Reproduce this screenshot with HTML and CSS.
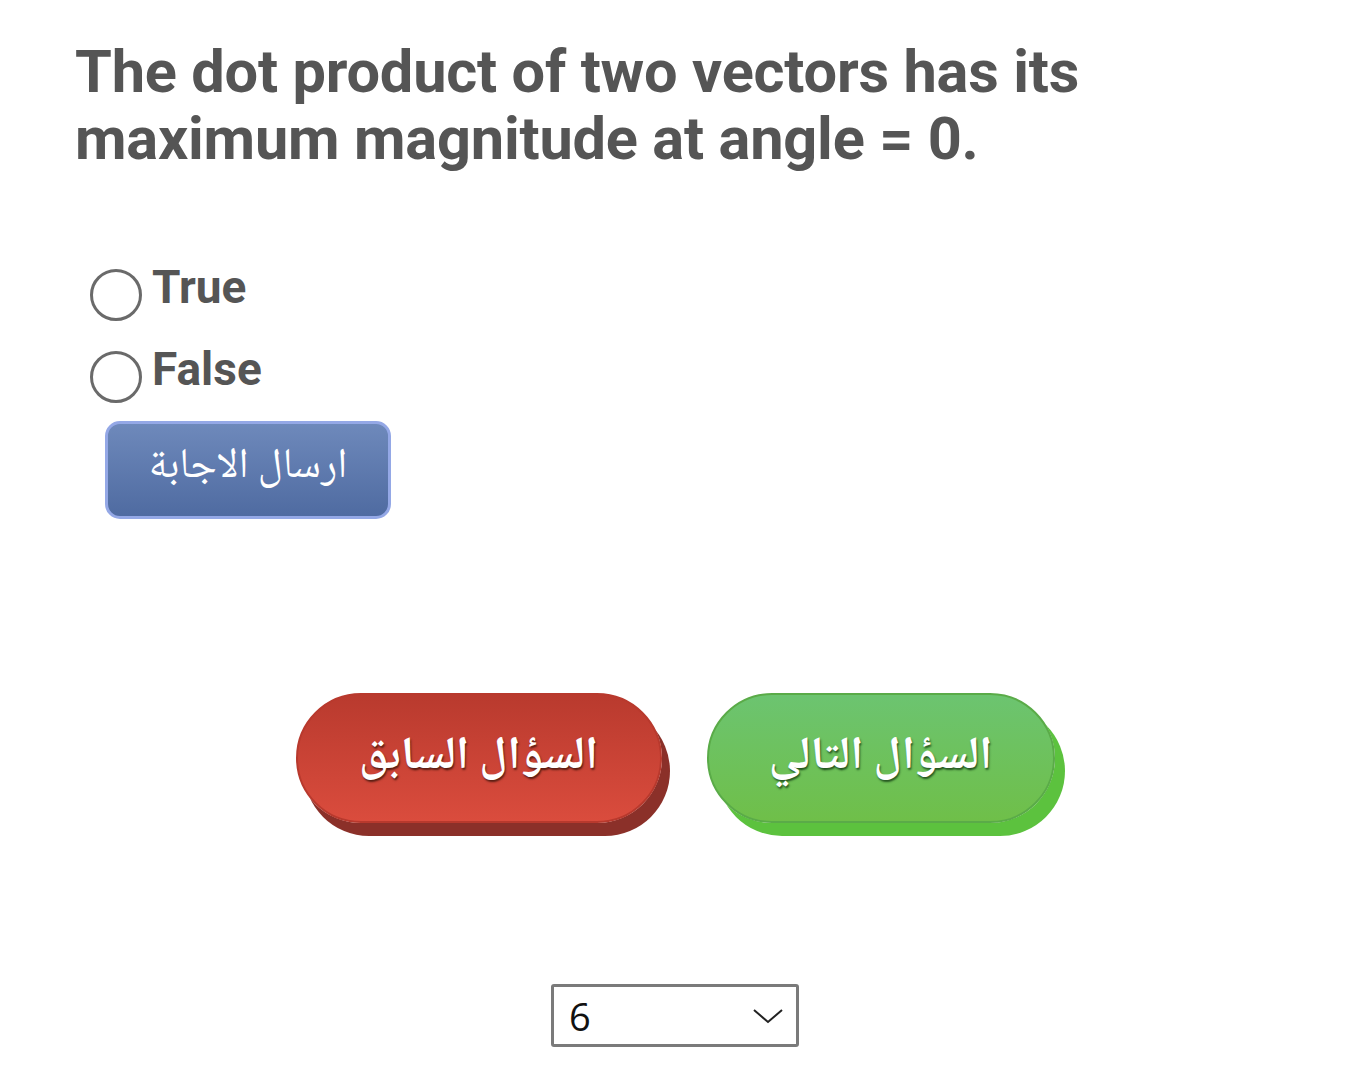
FILE: index.html
```html
<!DOCTYPE html>
<html lang="en">
<head>
<meta charset="utf-8">
<title>Question</title>
<link rel="stylesheet" href="styles.css">
</head>
<body>
<main class="page">
  <h1 class="question">The dot product of two vectors has its maximum magnitude at angle = 0.</h1>
  <form class="answers">
    <label class="option"><span class="radio"></span><span class="option-text">True</span></label>
    <label class="option"><span class="radio"></span><span class="option-text">False</span></label>
    <button type="button" class="submit" dir="rtl">ارسال الاجابة</button>
  </form>
  <div class="nav">
    <button type="button" class="pill pill-red" dir="rtl">السؤال السابق</button>
    <button type="button" class="pill pill-green" dir="rtl">السؤال التالي</button>
  </div>
  <div class="picker">
    <div class="select-wrap">
      <span class="select-value">6</span>
      <svg class="chevron" width="30" height="16" viewBox="0 0 30 16"><polyline points="1,2 15,14 29,2" fill="none" stroke="#222" stroke-width="2"/></svg>
    </div>
  </div>
</main>
</body>
</html>
```
FILE: styles.css
```css
html, body {
  margin: 0;
  padding: 0;
  background: #ffffff;
}
.page {
  width: 1350px;
  padding-top: 39px;
  font-family: Roboto, "Liberation Sans", sans-serif;
}
.question {
  margin: 0 0 0 75px;
  width: 1100px;
  font-size: 59.5px;
  line-height: 67px;
  font-weight: 700;
  color: #555555;
  letter-spacing: -0.2px;
}
.answers {
  margin: 87px 0 0 90px;
  display: flex;
  flex-direction: column;
  align-items: flex-start;
}
.option {
  display: flex;
  align-items: flex-start;
  gap: 10px;
  height: 82px;
}
.radio {
  width: 46px;
  height: 46px;
  border: 3px solid #6a6a6a;
  border-radius: 50%;
  margin-top: 9px;
}
.option-text {
  font-size: 46px;
  line-height: 50px;
  font-weight: 700;
  color: #555555;
  margin-top: 2px;
}
.submit {
  margin: -3px 0 0 15px;
  width: 286px;
  height: 98px;
  border: 3px solid #94a8e6;
  border-radius: 15px;
  background: linear-gradient(#6e89bb, #4f6ba1);
  color: #ffffff;
  font-family: "Noto Naskh Arabic", "Noto Sans Arabic", "DejaVu Sans", sans-serif;
  font-size: 42px;
  padding: 0 0 4px;
}
.nav {
  margin-top: 174px;
  display: flex;
  justify-content: center;
  gap: 45px;
}
.pill {
  height: 130px;
  border-radius: 65px;
  color: #ffffff;
  font-family: "Noto Naskh Arabic", "Noto Sans Arabic", "DejaVu Sans", sans-serif;
  font-size: 46px;
  font-weight: 700;
  text-shadow: 1px 2px 2px rgba(60, 20, 10, 0.8);
  padding: 0;
}
.pill-red {
  width: 366px;
  border: 2px solid #b8392d;
  background: linear-gradient(#b93a2e, #da4c3d);
  box-shadow: 8px 13px 0 #8b3029;
}
.pill-green {
  width: 348px;
  border: 2px solid #5aab48;
  background: linear-gradient(#6cc470, #6fbf49);
  box-shadow: 10px 13px 0 #5cc23e;
  text-shadow: 1px 2px 2px rgba(20, 60, 20, 0.8);
}
.picker {
  margin-top: 161px;
  display: flex;
  justify-content: center;
}
.select-wrap {
  position: relative;
  width: 242px;
  height: 57px;
  border: 3px solid #7a7a7a;
  border-radius: 3px;
  display: flex;
  align-items: center;
}
.select-value {
  margin-left: 15px;
  font-family: "Open Sans", "Noto Sans", sans-serif;
  font-size: 38px;
  color: #111111;
}
.chevron {
  position: absolute;
  right: 13px;
  top: 21px;
}
```
